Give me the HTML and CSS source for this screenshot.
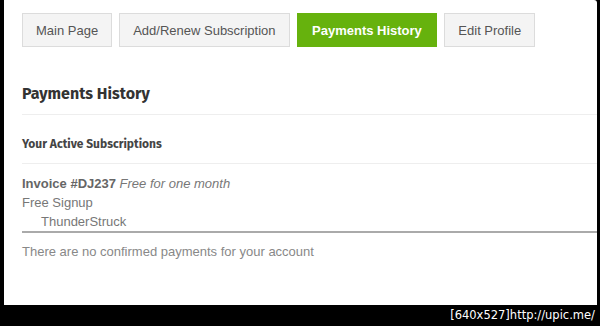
FILE: index.html
```html
<!DOCTYPE html>
<html lang="en">

<head>
  <meta charset="UTF-8" />
  <title>Payments History</title>
  <link rel="stylesheet" href="styles.css">
</head>

<body>
  <div class="shot">
    <div class="page">
      <nav class="tabs">
        <a class="tab" href="#">Main Page</a>
        <a class="tab" href="#">Add/Renew Subscription</a>
        <a class="tab active" href="#">Payments History</a>
        <a class="tab" href="#">Edit Profile</a>
      </nav>

      <h2 class="title">Payments History</h2>
      <h3 class="subtitle">Your Active Subscriptions</h3>

      <div class="subscription">
        <div class="line"><b>Invoice #DJ237</b> <i>Free for one month</i></div>
        <div class="line">Free Signup</div>
        <div class="line indent">ThunderStruck</div>
      </div>

      <p class="empty">There are no confirmed payments for your account</p>
    </div>
    <div class="footer">[640x527]http://upic.me/</div>
  </div>
</body>

</html>
```

FILE: styles.css
```css
* {
  box-sizing: border-box;
}

body {
  margin: 0;
  background: #000;
  font-family: 'Liberation Sans', Arial, sans-serif;
}

.shot {
  width: 600px;
  height: 326px;
  display: flex;
  flex-direction: column;
}

.page {
  background: #fff;
  margin-left: 4px;
  width: 593px;
  height: 305px;
  padding: 13px 0 0 18px;
  overflow: hidden;
  border-top-right-radius: 3px;
}

.tabs {
  display: flex;
  gap: 7px;
}

.tab {
  height: 34px;
  display: flex;
  align-items: center;
  padding: 0 13px;
  border: 1px solid #dcdcdc;
  background: #f4f4f4;
  color: #555;
  font-size: 13px;
  text-decoration: none;
}

.tab.active {
  padding: 0 14.5px;
  background: #66b20d;
  border-color: #66b20d;
  color: #fff;
  font-weight: bold;
}

.title {
  margin: 37px 0 0;
  padding-bottom: 11px;
  border-bottom: 1px solid #eee;
  font-family: 'Fira Sans', 'Open Sans', sans-serif;
  font-size: 16px;
  color: #333;
}

.subtitle {
  margin: 0;
  padding: 22px 0 12px;
  border-bottom: 1px solid #eee;
  font-family: 'Fira Sans', 'Open Sans', sans-serif;
  font-size: 12px;
  color: #444;
}

.subscription {
  padding-top: 10px;
  border-bottom: 2px solid #aaa;
  color: #777;
  font-size: 13px;
}

.line {
  height: 19px;
  line-height: 19px;
}

.line b {
  color: #666;
}

.indent {
  padding-left: 19px;
}

.empty {
  margin: 11px 0 0;
  font-size: 13px;
  color: #888;
}

.footer {
  height: 21px;
  text-align: right;
  padding-right: 5px;
  color: #fff;
  font-family: 'DejaVu Sans', sans-serif;
  font-size: 11.5px;
  line-height: 21px;
}
```
